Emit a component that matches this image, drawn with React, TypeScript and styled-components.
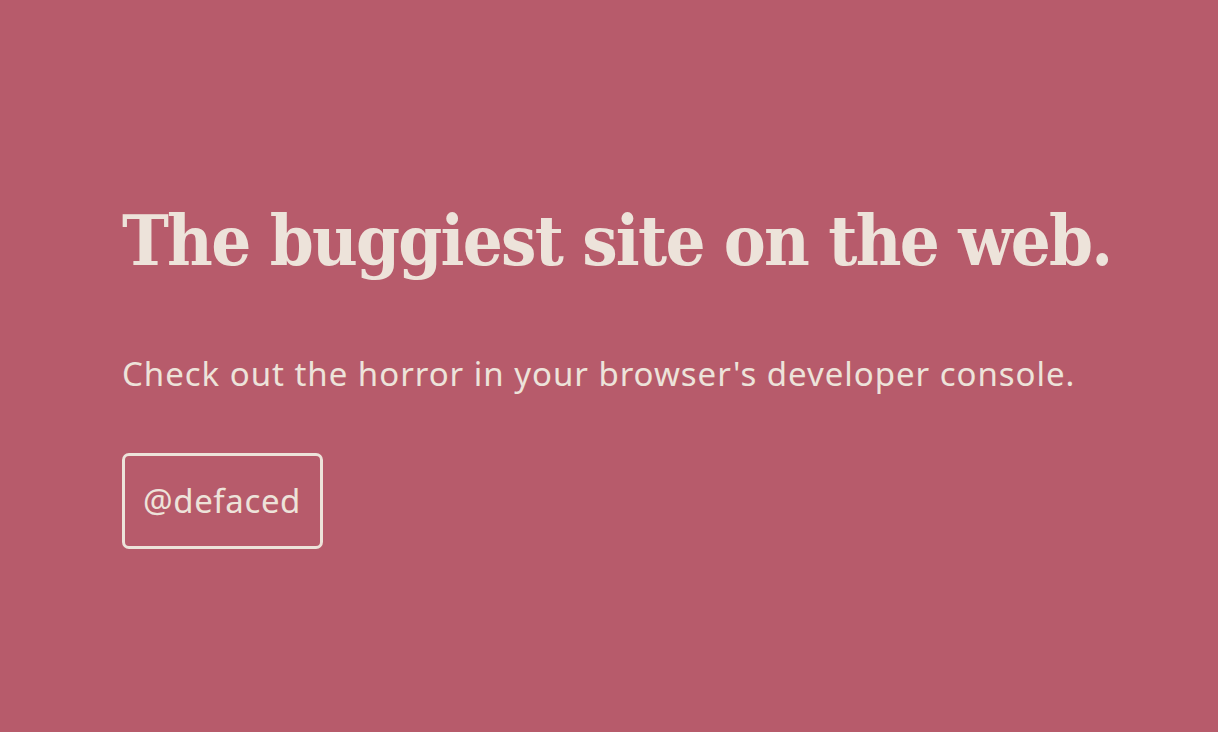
import React from "react";
import styled, { createGlobalStyle } from "styled-components";

const Global = createGlobalStyle`
  html, body { margin: 0; padding: 0; background: #b75b6b; }
  body { font-family: "Noto Sans", "Open Sans", sans-serif; color: #ede3da; }
`;

const Page = styled.main`
  min-height: 732px;
  box-sizing: border-box;
  padding: 197px 0 0 122px;
  display: flex;
  flex-direction: column;
  align-items: flex-start;
`;

const Title = styled.h1`
  margin: 0;
  font-family: "DejaVu Serif", serif;
  font-stretch: condensed;
  font-weight: 700;
  font-size: 70px;
  line-height: 88px;
  letter-spacing: -1.75px;
  white-space: nowrap;
`;

const Lead = styled.p`
  margin: 66px 0 0;
  font-size: 33px;
  letter-spacing: 0.97px;
  line-height: 1.4;
`;

const Handle = styled.a`
  margin-top: 56px;
  display: inline-block;
  padding: 22px 19px 22px 18px;
  border: 3px solid #ede3da;
  border-radius: 7px;
  font-size: 33px;
  letter-spacing: 0.6px;
  line-height: 1.4;
  color: #ede3da;
  text-decoration: none;
`;

export default function App() {
  return (
    <>
      <Global />
      <Page>
        <Title>The buggiest site on the web.</Title>
        <Lead>Check out the horror in your browser's developer console.</Lead>
        <Handle href="#">@defaced</Handle>
      </Page>
    </>
  );
}
